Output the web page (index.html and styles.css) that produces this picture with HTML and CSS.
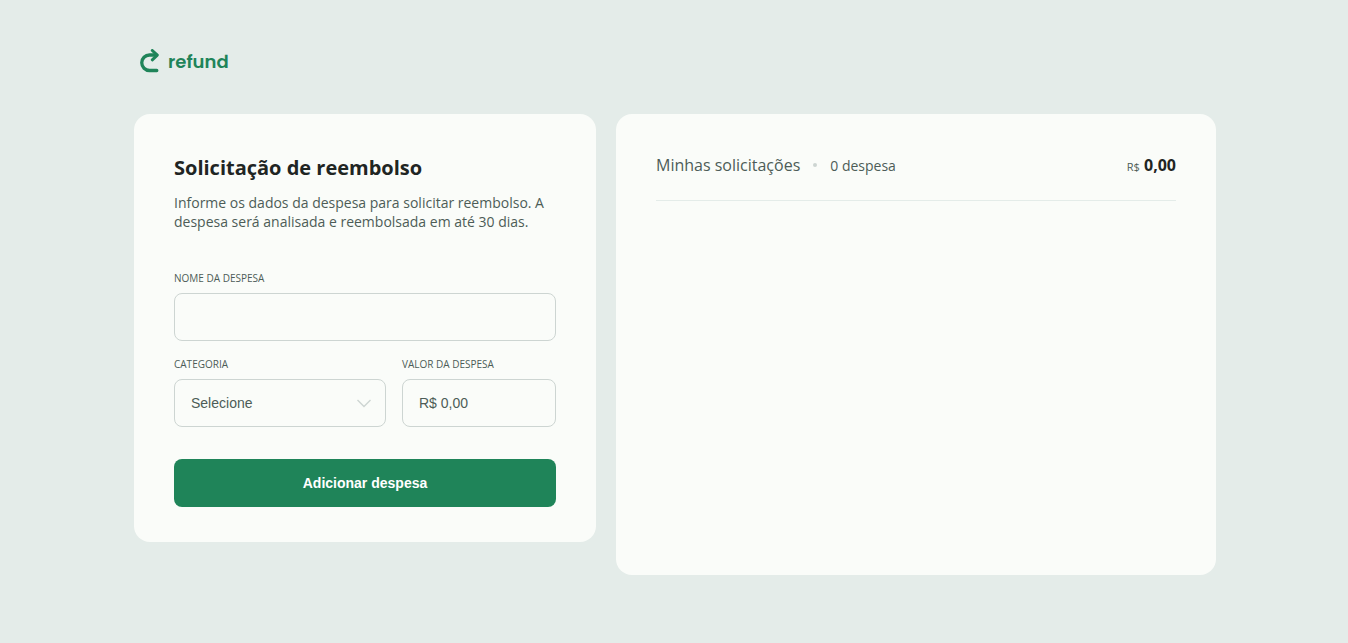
FILE: index.html
```html
<!DOCTYPE html>
<html lang="pt-BR">
<head>
<meta charset="UTF-8">
<meta name="viewport" content="width=device-width, initial-scale=1">
<title>Refund</title>
<link rel="stylesheet" href="styles.css">
</head>
<body>
<div class="page">
  <header class="logo">
    <svg class="logo-icon" viewBox="0 0 20 24" fill="none" stroke="#1f8459" stroke-width="3.300" stroke-linecap="round" stroke-linejoin="round" aria-hidden="true">
      <path d="M16.800 21.500H9.500A7.750 7.750 0 0 1 9.500 6H16"/>
      <path stroke-width="3" d="M12.300 1.500L17.300 6.100L12.300 10.800"/>
    </svg>
    <span class="logo-text">refund</span>
  </header>
  <main class="content">
    <form class="card request">
      <h1 class="title">Solicitação de reembolso</h1>
      <p class="intro">Informe os dados da despesa para solicitar reembolso. A despesa será analisada e reembolsada em até 30 dias.</p>
      <div class="field">
        <label for="expense">Nome da despesa</label>
        <input id="expense" type="text">
      </div>
      <div class="row">
        <div class="field category">
          <label for="category">Categoria</label>
          <div class="select-box">
            <select id="category"><option>Selecione</option><option>Alimentação</option><option>Hospedagem</option><option>Serviços</option><option>Transporte</option><option>Outros</option></select>
            <svg class="chevron" viewBox="0 0 16 16" fill="none" stroke="#cdd5d2" stroke-width="1.400" aria-hidden="true"><path d="M1.500 5L8 11.500L14.500 5"/></svg>
          </div>
        </div>
        <div class="field amount">
          <label for="amount">Valor da despesa</label>
          <input id="amount" type="text" placeholder="R$ 0,00">
        </div>
      </div>
      <button class="submit" type="submit">Adicionar despesa</button>
    </form>
    <aside class="card list">
      <div class="list-header">
        <h2 class="list-title">Minhas solicitações<span class="dot"></span><span class="count">0 despesa</span></h2>
        <p class="total"><small>R$</small> 0,00</p>
      </div>
    </aside>
  </main>
</div>
</body>
</html>
```
FILE: styles.css
```css
* { box-sizing: border-box; margin: 0; padding: 0; }
body { min-height: 100vh; background: #e4ece9; color: #1f2523; font-family: "Open Sans", sans-serif; }
.page { max-width: 1084px; margin: 0 auto; padding: 48px 0 68px 2px; }
.logo { display: flex; align-items: center; gap: 8px; height: 26px; padding-left: 6px; margin-bottom: 40px; }
.logo-icon { width: 20px; height: 24px; }
.logo-text { color: #1f8459; font: 600 18px/24px "Poppins", "Inter", sans-serif; padding-top: 2px; }
.content { display: grid; grid-template-columns: 77fr 100fr; gap: 20px; align-items: start; }
.card { border-radius: 16px; background: #fafcf9; padding: 40px; }
.request { padding-bottom: 35px; }
.title { font-size: 20px; line-height: 27px; font-weight: 700; margin-bottom: 12px; }
.intro { color: #4d5c57; font-size: 14px; line-height: 19px; margin-bottom: 40px; }
.field { display: flex; flex-direction: column; }
.field label { color: #4d5c57; font-size: 10px; line-height: 14px; margin-bottom: 8px; text-transform: uppercase; }
.field input, .field select { width: 100%; height: 48px; border: 1px solid #cdd5d2; border-radius: 8px; background: transparent; color: #4d5c57; padding: 0 16px; font: 14px "Liberation Sans", Arial, sans-serif; outline: none; }
.field input::placeholder { color: #4d5c57; }
.field select { appearance: none; }
.field input:focus, .field select:focus { border-color: #1f8459; }
.row { display: grid; grid-template-columns: 212fr 154fr; gap: 16px; margin: 16px 0 32px; }
.select-box { position: relative; }
.chevron { position: absolute; right: 14px; top: 16px; width: 16px; height: 16px; pointer-events: none; }
.submit { width: 100%; height: 48px; border: 0; border-radius: 8px; background: #1f8459; color: #fff; font: 700 14px "Liberation Sans", Arial, sans-serif; cursor: pointer; }
.list { min-height: 461px; }
.list-header { display: flex; align-items: center; justify-content: space-between; height: 47px; padding-bottom: 24px; border-bottom: 1px solid #e4ece9; }
.list-title { display: flex; align-items: baseline; color: #4d5c57; font-size: 16px; line-height: 22px; font-weight: 400; }
.dot { align-self: center; width: 4px; height: 4px; border-radius: 50%; background: #cdd5d2; margin: 0 13px; }
.count { font-size: 14px; }
.total { font-size: 16px; line-height: 22px; font-weight: 700; }
.total small { color: #4d5c57; font-size: 11px; line-height: 11px; font-weight: 400; }
```
